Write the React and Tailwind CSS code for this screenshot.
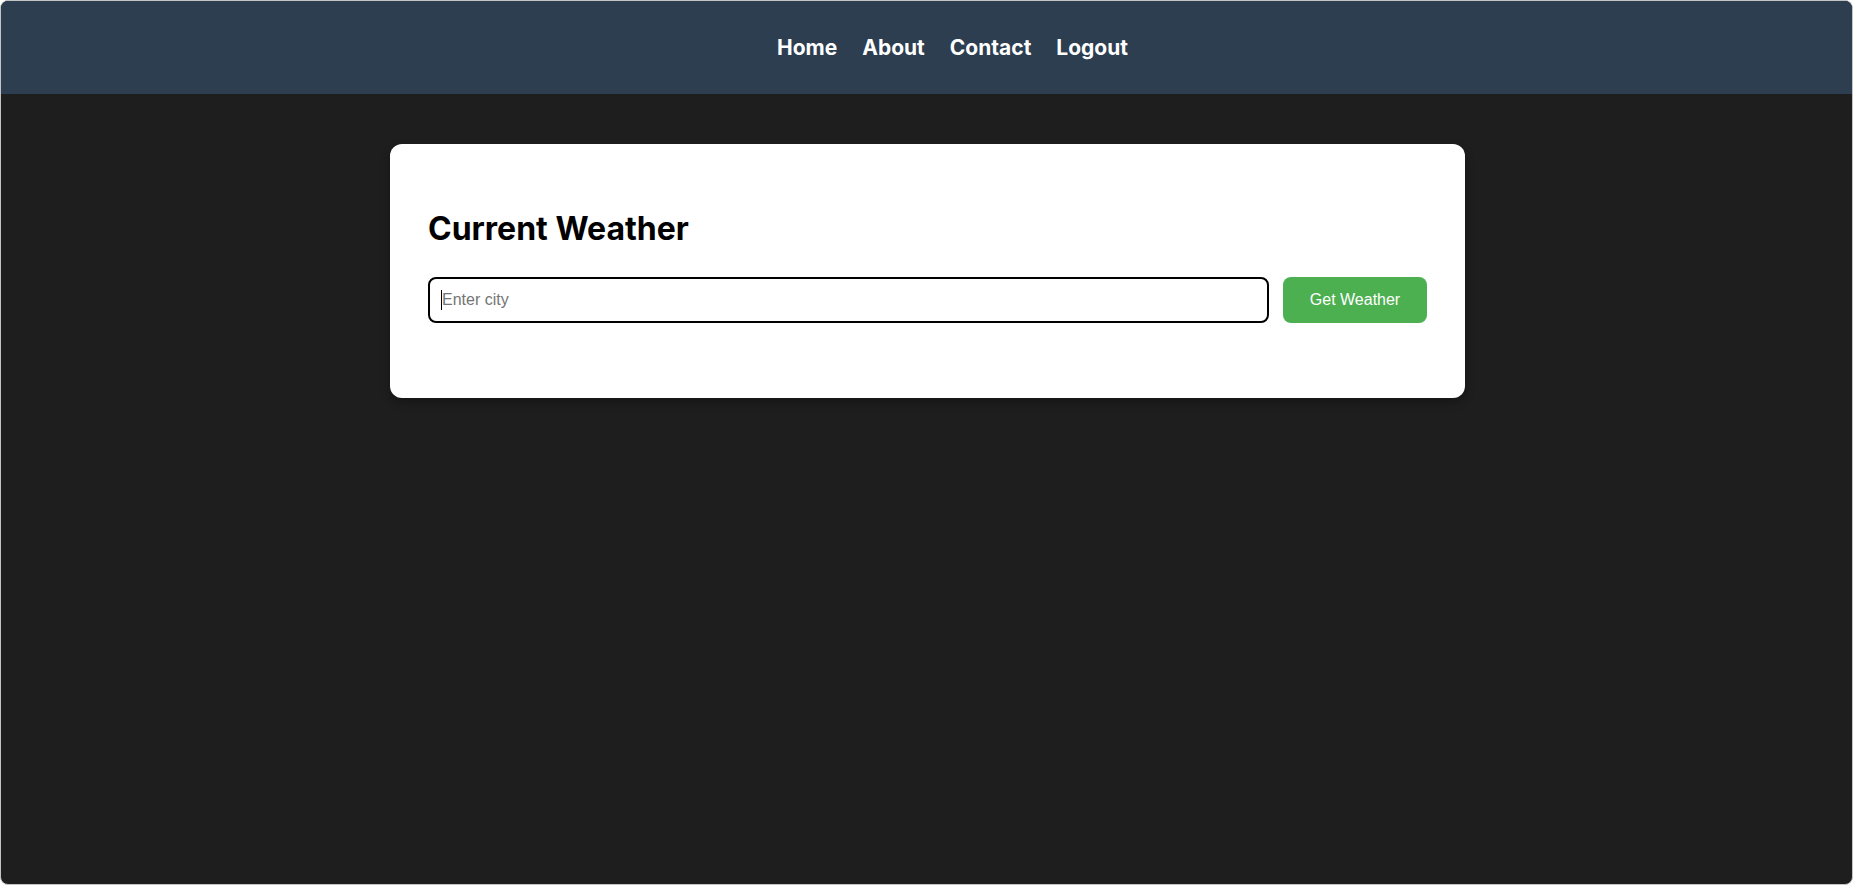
export default function App() {
  const poppins = { fontFamily: 'Inter, "Open Sans", sans-serif' };
  return (
    <div className="w-[1855px] h-[886px] bg-white">
      <div className="w-[1853px] h-[885px] rounded-[8px] border border-[#c4c4c4] bg-[#1e1e1e] overflow-hidden">
        <nav className="h-[93px] bg-[#2c3e50] flex items-center justify-center pl-[52px]">
          <ul className="flex items-center gap-[25px] text-white font-bold text-[21px] leading-[24px]" style={poppins}>
            <li><a href="#">Home</a></li>
            <li><a href="#">About</a></li>
            <li><a href="#">Contact</a></li>
            <li><a href="#">Logout</a></li>
          </ul>
        </nav>
        <main className="pt-[50px] pl-[2px] flex justify-center">
          <div className="w-[1075px] bg-white rounded-[12px] px-[38px] pt-[69px] pb-[75px] shadow-[0_4px_10px_rgba(0,0,0,0.3)]">
            <h2 className="text-[32px] leading-[32px] font-bold text-black" style={poppins}>Current Weather</h2>
            <div className="mt-[32px] flex gap-[14px]">
              <div className="relative flex-1">
                <input
                  type="text"
                  placeholder="Enter city"
                  className="w-full h-[46px] rounded-[8px] border-2 border-black px-[12px] text-[16px] text-black placeholder:text-[#757575] outline-none"
                  style={{ fontFamily: '"Liberation Sans", Arial, sans-serif' }}
                />
                <span className="absolute left-[13px] top-[13px] w-px h-[20px] bg-black"></span>
              </div>
              <button
                className="w-[144px] h-[46px] rounded-[8px] bg-[#4caf50] text-white text-[16px]"
                style={{ fontFamily: '"Liberation Sans", Arial, sans-serif' }}
              >
                Get Weather
              </button>
            </div>
          </div>
        </main>
      </div>
    </div>
  );
}
